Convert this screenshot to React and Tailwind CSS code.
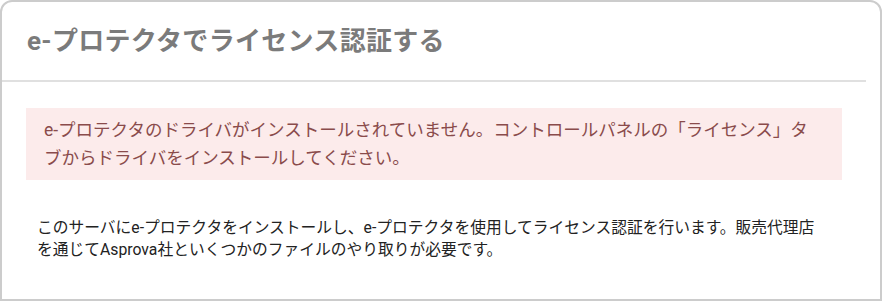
export default function App() {
  return (
    <div className="w-[882px] h-[301px] bg-white font-['Roboto','Noto_Sans_CJK_JP',sans-serif]">
      <div className="h-full border-2 border-[#cccccc] rounded-t-[12px] flex flex-col overflow-hidden">
        <div className="mr-[14px] flex flex-col">
          <div className="h-[78px] px-[25px] flex items-center">
            <h1 className="text-[26px] font-bold text-[#7b7b7b] tracking-[0.3px]">
              e-プロテクタでライセンス認証する
            </h1>
          </div>
          <div className="h-[2px] bg-[#e0e0e0]" />
          <div className="px-[24px] pt-[26px]">
            <div className="bg-[#fcebeb] pl-[18px] pr-[20px] py-[8px] text-[17.5px] leading-[28px] text-[#8a4b4b]">
              e-プロテクタのドライバがインストールされていません。コントロールパネルの「ライセンス」タブからドライバをインストールしてください。
            </div>
            <p className="mt-[37px] pl-[11px] pr-[14px] text-[15.75px] leading-[22px] text-[#222222]">
              このサーバにe-プロテクタをインストールし、e-プロテクタを使用してライセンス認証を行います。販売代理店を通じてAsprova社といくつかのファイルのやり取りが必要です。
            </p>
          </div>
        </div>
      </div>
    </div>
  );
}
